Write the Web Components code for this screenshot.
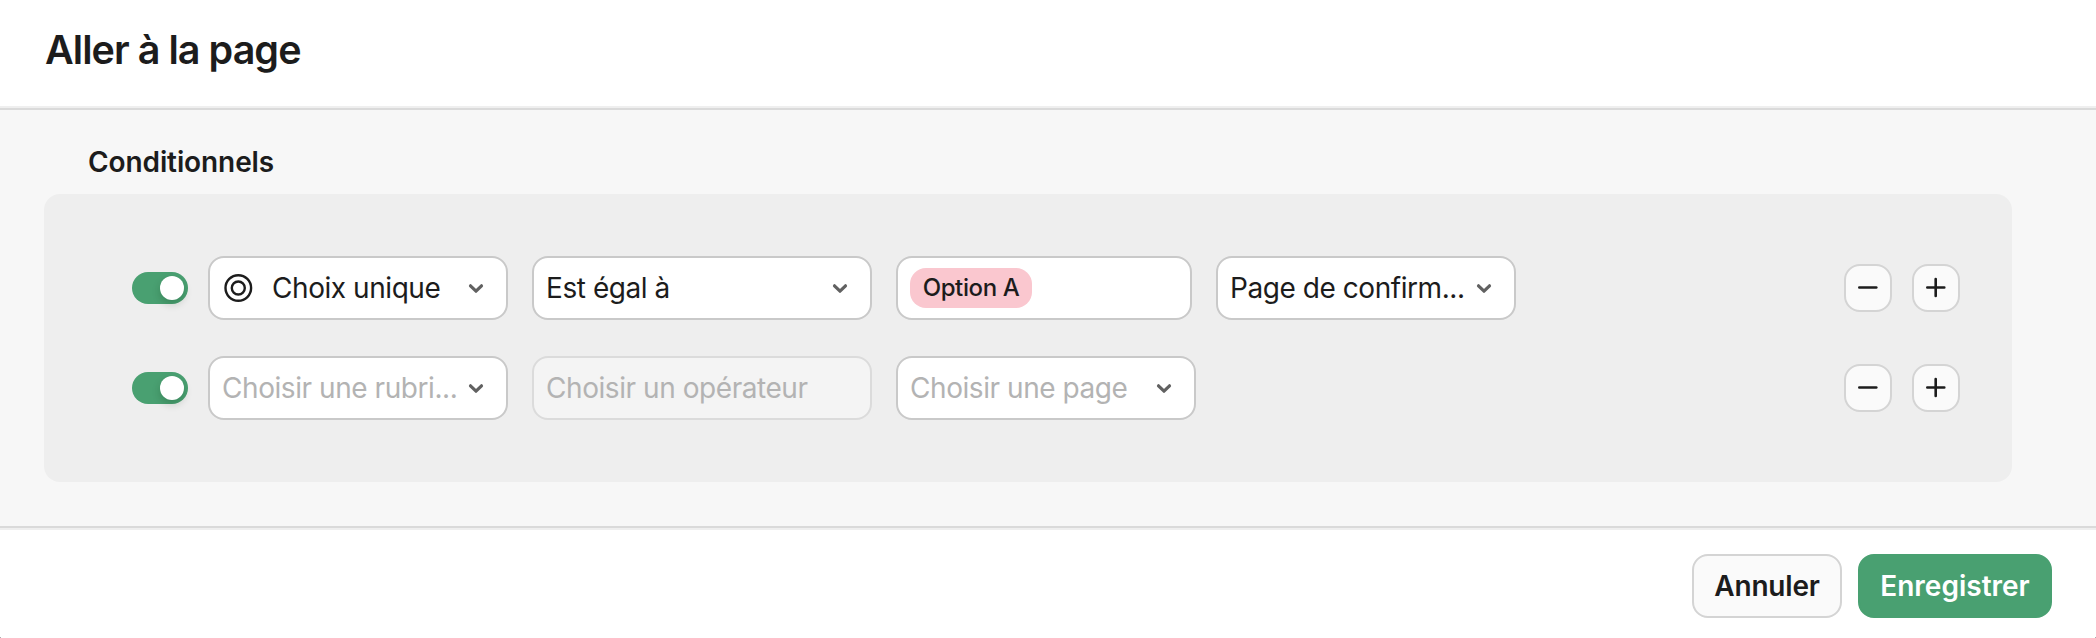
<!DOCTYPE html>
<html lang="fr">
<head>
<meta charset="utf-8">
<title>Aller à la page</title>
<style>
body {
  margin: 0;
  background: #333;
}
</style>
</head>
<body>
<page-dialog>
  <span slot="title">Aller à la page</span>
  <condition-panel label="Conditionnels">
    <condition-row>
      <select-field icon style="--width: 300px">Choix unique</select-field>
      <select-field style="--width: 340px">Est égal à</select-field>
      <select-field plain style="--width: 296px"><option-tag>Option A</option-tag></select-field>
      <select-field style="--width: 300px">Page de confirm...</select-field>
    </condition-row>
    <condition-row>
      <select-field placeholder style="--width: 300px">Choisir une rubri...</select-field>
      <select-field placeholder disabled plain style="--width: 340px">Choisir un opérateur</select-field>
      <select-field placeholder style="--width: 300px">Choisir une page</select-field>
    </condition-row>
  </condition-panel>
  <action-button slot="actions">Annuler</action-button>
  <action-button slot="actions" primary>Enregistrer</action-button>
</page-dialog>

<script>
function attach(el, html) {
  const template = document.createElement('template');
  template.innerHTML = html;
  el.attachShadow({mode: 'open'});
  el.shadowRoot.appendChild(template.content.cloneNode(true));
}

class PageDialog extends HTMLElement {
  constructor() {
    super();
    attach(this, `
<style>
:host {
  display: flex;
  flex-direction: column;
  box-sizing: border-box;
  height: 638px;
  border-radius: 0 0 1.5px 1.5px;
  background: #fff;
  font-family: Inter, "Liberation Sans", sans-serif;
  font-size: 28px;
  color: #1c1c1c;
}

header {
  box-sizing: border-box;
  height: 108px;
  padding: 26px 45px 0;
  border-bottom: 2px solid #efefef;
}

h1 {
  margin: 0;
  font-size: 39.5px;
  line-height: 48px;
  font-weight: 600;
  letter-spacing: -0.95px;
}

main {
  box-sizing: border-box;
  height: 420px;
  padding: 32px 84px 0 44px;
  background: #f7f7f7;
  border-top: 2px solid #dadada;
  border-bottom: 2px solid #dadada;
}

footer {
  display: flex;
  flex: 1;
  justify-content: flex-end;
  align-items: flex-start;
  gap: 16px;
  padding: 24px 44px 0;
  border-top: 2px solid #efefef;
}
</style>
<header><h1><slot name="title"></slot></h1></header>
<main><slot></slot></main>
<footer><slot name="actions"></slot></footer>
`);
  }
}

class ConditionPanel extends HTMLElement {
  constructor() {
    super();
    attach(this, `
<style>
:host {
  display: block;
}

h2 {
  margin: 0 0 12px;
  padding-left: 44px;
  font-size: 28px;
  line-height: 40px;
  font-weight: 600;
  letter-spacing: -0.1px;
}

section {
  display: flex;
  flex-direction: column;
  gap: 36px;
  box-sizing: border-box;
  height: 288px;
  padding: 62px 52px 0 88px;
  border-radius: 16px;
  background: #eee;
}
</style>
<h2></h2>
<section><slot></slot></section>
`);
  }

  connectedCallback() {
    this.shadowRoot.querySelector('h2').textContent = this.getAttribute('label');
  }
}

class ConditionRow extends HTMLElement {
  constructor() {
    super();
    attach(this, `
<style>
:host {
  display: flex;
  align-items: center;
  height: 64px;
}

.fields {
  display: flex;
  flex: 1;
  gap: 24px;
  margin-left: 20px;
}

.buttons {
  display: flex;
  gap: 20px;
}
</style>
<toggle-switch></toggle-switch>
<div class="fields"><slot></slot></div>
<div class="buttons">
  <icon-button icon="minus"></icon-button>
  <icon-button icon="plus"></icon-button>
</div>
`);
  }
}

class ToggleSwitch extends HTMLElement {
  constructor() {
    super();
    attach(this, `
<style>
:host {
  display: flex;
  justify-content: flex-end;
  box-sizing: border-box;
  width: 56px;
  height: 32px;
  padding: 4px;
  border-radius: 16px;
  background: #49a071;
}

span {
  width: 24px;
  height: 24px;
  border-radius: 50%;
  background: #fff;
  box-shadow: 0 4px 8px rgba(0, 35, 11, 0.2);
}
</style>
<span></span>
`);
  }
}

class SelectField extends HTMLElement {
  constructor() {
    super();
    attach(this, `
<style>
:host {
  display: flex;
  align-items: center;
  box-sizing: border-box;
  width: var(--width);
  height: 64px;
  padding: 0 20px 0 12px;
  border: 2px solid #c9c9c9;
  border-radius: 16px;
  background: #fff;
  white-space: nowrap;
  letter-spacing: -0.44px;
}

:host([placeholder]) {
  color: #b3b3b3;
}

:host([disabled]) {
  border-color: #dbdbdb;
  background: #f4f4f4;
}

.value {
  flex: 1;
  min-width: 0;
  line-height: 40px;
}

svg {
  flex: none;
}

.type {
  display: none;
  margin-right: 18px;
}

:host([icon]) .type {
  display: block;
}

:host([plain]) .arrow {
  display: none;
}
</style>
<svg class="type" width="32" height="32" viewBox="0 0 32 32" fill="none" stroke="#1c1c1c" stroke-width="2.4">
  <circle cx="16.3" cy="16" r="12.8"/>
  <circle cx="16.3" cy="16" r="6.5"/>
</svg>
<div class="value"><slot></slot></div>
<svg class="arrow" width="20" height="20" viewBox="0 0 20 20" fill="none" stroke="#616161" stroke-width="3.2" stroke-linecap="round" stroke-linejoin="round">
  <path d="M4.5 7.8 10 13.2 15.5 7.8"/>
</svg>
`);
  }
}

class OptionTag extends HTMLElement {
  constructor() {
    super();
    attach(this, `
<style>
:host {
  display: block;
  box-sizing: border-box;
  width: 122px;
  height: 40px;
  border-radius: 16px;
  background: #fac7cf;
  font-size: 24px;
  font-weight: 500;
  line-height: 40px;
  text-align: center;
  letter-spacing: -0.4px;
}
</style>
<slot></slot>
`);
  }
}

class IconButton extends HTMLElement {
  constructor() {
    super();
    attach(this, `
<style>
:host {
  display: flex;
  align-items: center;
  justify-content: center;
  box-sizing: border-box;
  width: 48px;
  height: 48px;
  border: 2px solid #d4d4d4;
  border-radius: 16px;
  background: #fafafa;
}
</style>
<svg width="24" height="24" viewBox="0 0 24 24" fill="none" stroke="#1c1c1c" stroke-width="2.6" stroke-linecap="round">
  <path/>
</svg>
`);
  }

  connectedCallback() {
    const d = this.getAttribute('icon') === 'plus' ? 'M3.3 11.5H20.3M11.7 3V20' : 'M3.3 11.5H20.3';
    this.shadowRoot.querySelector('path').setAttribute('d', d);
  }
}

class ActionButton extends HTMLElement {
  constructor() {
    super();
    attach(this, `
<style>
:host {
  display: block;
  box-sizing: border-box;
  width: 150px;
  height: 64px;
  border: 2px solid #d4d4d4;
  border-radius: 16px;
  background: #fafafa;
  font-weight: 600;
  line-height: 60px;
  text-align: center;
  letter-spacing: -0.2px;
}

:host([primary]) {
  width: 194px;
  border-color: #49a071;
  background: #49a071;
  color: #fff;
  letter-spacing: 0;
}
</style>
<slot></slot>
`);
  }
}

window.customElements.define('page-dialog', PageDialog);
window.customElements.define('condition-panel', ConditionPanel);
window.customElements.define('condition-row', ConditionRow);
window.customElements.define('toggle-switch', ToggleSwitch);
window.customElements.define('select-field', SelectField);
window.customElements.define('option-tag', OptionTag);
window.customElements.define('icon-button', IconButton);
window.customElements.define('action-button', ActionButton);
</script>
</body>
</html>
